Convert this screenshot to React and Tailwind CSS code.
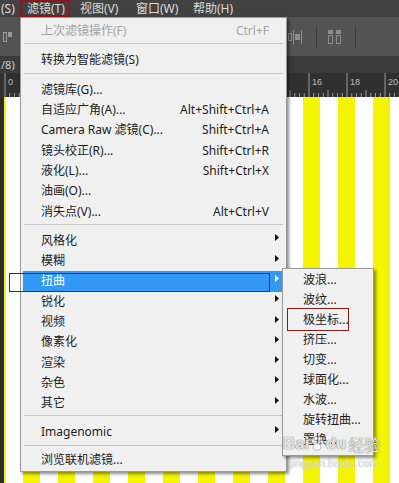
import React from "react";

// Photoshop "滤镜" menu opened over a striped canvas

const mainItems = [
  { label: "上次滤镜操作(F)", shortcut: "Ctrl+F", disabled: true },
  { sep: true },
  { label: "转换为智能滤镜(S)" },
  { sep: true },
  { label: "滤镜库(G)..." },
  { label: "自适应广角(A)...", shortcut: "Alt+Shift+Ctrl+A" },
  { label: "Camera Raw 滤镜(C)...", shortcut: "Shift+Ctrl+A" },
  { label: "镜头校正(R)...", shortcut: "Shift+Ctrl+R" },
  { label: "液化(L)...", shortcut: "Shift+Ctrl+X" },
  { label: "油画(O)..." },
  { label: "消失点(V)...", shortcut: "Alt+Ctrl+V" },
  { sep: true },
  { label: "风格化", sub: true },
  { label: "模糊", sub: true },
  { label: "扭曲", sub: true, active: true },
  { label: "锐化", sub: true },
  { label: "视频", sub: true },
  { label: "像素化", sub: true },
  { label: "渲染", sub: true },
  { label: "杂色", sub: true },
  { label: "其它", sub: true },
  { sep: true },
  { label: "Imagenomic", sub: true },
  { sep: true, last: true },
  { label: "浏览联机滤镜..." },
];

const subItems = ["波浪...", "波纹...", "极坐标...", "挤压...", "切变...", "球面化...", "水波...", "旋转扭曲...", "置换..."];

// only the ruler numbers that are not hidden under the menu
const rulerLabels = [0, 16, 18, 20];

function Arrow({ white }) {
  return (
    <svg width="4" height="7" viewBox="0 0 4 7" className="mb-[6px]">
      <path d="M0 0 L4 3.5 L0 7 Z" fill={white ? "#ffffff" : "#111111"} />
    </svg>
  );
}

function MenuRow({ item }) {
  if (item.sep) {
    return (
      <div className={item.last ? "ml-[1px] mt-[2px] mb-[4px] h-px bg-[#c8c8c8]" : "ml-[1px] mt-[2px] mb-[6px] h-px bg-[#c8c8c8]"} />
    );
  }
  const tone = item.active ? "bg-[#3399f7] text-white" : item.disabled ? "text-[#a3a3a3]" : "text-[#1c1c1c]";
  return (
    <div className={`flex h-[20.3px] items-center pl-[18px] ${tone}`}>
      <span className="flex-1 whitespace-nowrap">{item.label}</span>
      {item.shortcut && <span className="whitespace-nowrap">{item.shortcut}</span>}
      <span className="flex w-[14px] items-center pl-[6px]">{item.sub && <Arrow white={item.active} />}</span>
    </div>
  );
}

function Ruler() {
  const ticks = [];
  for (let i = 0; i <= 84; i++) {
    const x = 5 + i * 4.75;
    const major = i % 8 === 0;
    const mid = i % 4 === 0;
    ticks.push(
      <line key={i} x1={x} x2={x} y1={major ? 0 : mid ? 17 : 20} y2={24} stroke="#9a9a9a" strokeWidth="1" />
    );
  }
  return (
    <svg width="399" height="24" className="block">
      {ticks}
      {rulerLabels.map((n) => (
        <text key={n} x={5 + n * 19 + 3} y={12} fontSize="9" fill="#bdbdbd" fontFamily="Liberation Sans, sans-serif">
          {n}
        </text>
      ))}
    </svg>
  );
}

export default function App() {
  const stripes = Array.from({ length: 11 }, (_, i) => i);

  return (
    <div className="relative h-[483px] w-[399px] overflow-hidden bg-[#535353] font-['Noto_Sans','Noto_Sans_CJK_SC',sans-serif] text-[12px]">
      {/* menu bar */}
      <div className="flex h-[17px] items-center bg-[#424242] leading-none text-[#dcdcdc]">
        <span className="w-[20px] pl-[1px]">(S)</span>
        <span className="w-[50px] pl-[7px]">滤镜(T)</span>
        <span className="w-[57px] pl-[10px]">视图(V)</span>
        <span className="w-[58px] pl-[9px]">窗口(W)</span>
        <span className="pl-[8px]">帮助(H)</span>
      </div>

      {/* options bar */}
      <div className="flex h-[39px] items-center bg-[#535353]">
        <svg width="9" height="12" viewBox="0 0 9 12" className="ml-[3px]">
          <rect x="0.5" y="1.5" width="3" height="9" fill="none" stroke="#9a9a9a" />
          <rect x="5" y="1" width="4" height="5" fill="#9a9a9a" />
        </svg>
        <div className="ml-auto mr-[43px] flex items-center">
          <svg width="14" height="14" viewBox="0 0 14 14">
            <rect x="0.5" y="3.5" width="3" height="7" fill="none" stroke="#8c8c8c" />
            <rect x="5" y="0" width="1" height="14" fill="#8c8c8c" />
            <rect x="7" y="4" width="5" height="6" fill="#8c8c8c" />
            <rect x="13" y="0" width="1" height="14" fill="#8c8c8c" />
          </svg>
          <div className="ml-[14px] h-[22px] w-px bg-[#3e3e3e]" />
          <svg width="15" height="14" viewBox="0 0 15 14" className="ml-[10px]">
            <rect x="1" y="0" width="5" height="4" fill="#8c8c8c" />
            <rect x="9" y="0" width="5" height="4" fill="#8c8c8c" />
            <rect x="1.5" y="5.5" width="4" height="8" fill="none" stroke="#8c8c8c" />
            <rect x="9.5" y="5.5" width="4" height="8" fill="none" stroke="#8c8c8c" />
          </svg>
          <div className="ml-[13px] h-[22px] w-px bg-[#3e3e3e]" />
        </div>
      </div>

      {/* document tab strip */}
      <div className="flex h-[17px] items-center bg-[#3b3b3b] pl-[1px] text-[11px] leading-none text-[#cfcfcf]">/8)</div>

      {/* ruler */}
      <div className="h-[24px] bg-[#303030]">
        <Ruler />
      </div>

      {/* canvas */}
      <div className="flex h-[386px]">
        <div className="w-[4px] bg-[#2c2c2c]" />
        <div className="flex flex-1 overflow-hidden bg-white">
          <div className="w-[2px] shrink-0 bg-[#f5f500]" />
          <div className="w-[17px] shrink-0" />
          {stripes.map((i) => (
            <React.Fragment key={i}>
              <div className="w-[17px] shrink-0 bg-[#f5f500]" />
              <div className="w-[18px] shrink-0" />
            </React.Fragment>
          ))}
        </div>
      </div>

      {/* filter menu */}
      <div className="absolute left-[20px] top-[17px] h-[455px] w-[267px] border border-[#999999] bg-[#f0f0f0] pl-[2px] pr-[3px] pt-[3px] shadow-[2px_2px_3px_rgba(0,0,0,0.45)]">
        {mainItems.map((item, i) => (
          <MenuRow key={i} item={item} />
        ))}
      </div>

      {/* distort submenu */}
      <div className="absolute left-[282px] top-[268px] h-[188px] w-[92px] border border-[#999999] bg-[#f0f0f0] pt-[1px] text-[#1c1c1c] shadow-[2px_2px_3px_rgba(0,0,0,0.45)]">
        {subItems.map((s) => (
          <div key={s} className="flex h-[20px] items-center whitespace-nowrap pl-[20px]">
            {s}
          </div>
        ))}
      </div>

      {/* annotation boxes */}
      <div className="absolute left-[20px] top-0 h-[17px] w-[50px] border-2 border-[#8e1616]" />
      <div className="absolute left-[9px] top-[273px] h-[19px] w-[261px] border border-[#861818]" />
      <div className="absolute left-[287px] top-[308px] h-[23px] w-[62px] border border-[#861818]" />

      {/* watermark */}
      <div className="absolute left-[283px] top-[435px] flex items-center font-['Liberation_Sans','Noto_Sans_CJK_SC',sans-serif] text-[17px] font-bold leading-none text-white/80 [text-shadow:0_0_1px_#777,0_0_1px_#777]">
        <span>Bai</span>
        <svg width="14" height="15" viewBox="0 0 14 15" className="mx-[1px]">
          <g fill="#ffffff" stroke="#888888" strokeWidth="0.6" opacity="0.85">
            <ellipse cx="3" cy="5" rx="1.6" ry="2.2" />
            <ellipse cx="6" cy="2.5" rx="1.6" ry="2.2" />
            <ellipse cx="9.5" cy="2.8" rx="1.6" ry="2.2" />
            <ellipse cx="12" cy="6" rx="1.5" ry="2" />
            <path d="M7 7 C4 7 2.5 11 3.5 13 C5 14.5 9 14.5 10.5 13 C11.5 11 10 7 7 7 Z" />
          </g>
        </svg>
        <span>du</span>
        <span className="ml-[2px] font-['Noto_Sans_CJK_SC',sans-serif] text-[16px] font-normal">经验</span>
      </div>
      <div className="absolute left-[290px] top-[458px] font-['Liberation_Sans',sans-serif] text-[11px] leading-none text-white/80 [text-shadow:0_0_1px_#888]">
        jingyan.baidu.com
      </div>
    </div>
  );
}
